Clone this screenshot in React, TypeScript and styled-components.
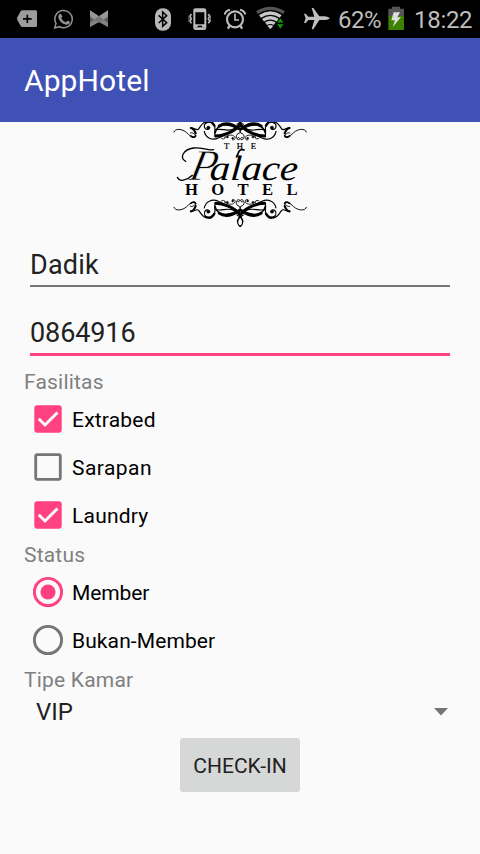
import React, { useState } from 'react';
import styled, { createGlobalStyle } from 'styled-components';

const GlobalStyle = createGlobalStyle`
  * { box-sizing: border-box; }
  body { margin: 0; background: #fafafa; font-family: Roboto, "Noto Sans", sans-serif; }
`;

const Screen = styled.div`
  width: 480px;
  height: 854px;
  display: flex;
  flex-direction: column;
  background: #fafafa;
  overflow: hidden;
`;

const StatusBar = styled.div`
  height: 38px;
  flex: none;
  display: flex;
  background: #000;
`;

const Glyph = styled.svg<{ $gap: number }>`
  flex: none;
  height: 38px;
  margin-left: ${(p) => p.$gap}px;
`;

const StatusText = styled.span<{ $gap: number; $width: number; $spacing: number }>`
  flex: none;
  width: ${(p) => p.$width}px;
  margin-left: ${(p) => p.$gap}px;
  letter-spacing: ${(p) => p.$spacing}px;
  font-size: 24px;
  line-height: 40px;
  white-space: nowrap;
  color: #bebebe;
`;

const AppBar = styled.header`
  height: 84px;
  flex: none;
  display: flex;
  align-items: center;
  padding: 1px 24px 0;
  background: #3f51b5;
`;

const Title = styled.h1`
  margin: 0;
  font-size: 30px;
  font-weight: 400;
  line-height: 36px;
  letter-spacing: 0.1px;
  color: #fff;
`;

const Form = styled.main`
  flex: 1;
  display: flex;
  flex-direction: column;
  padding: 0 24px;
`;

const Logo = styled.svg`
  width: 150px;
  height: 113px;
  flex: none;
  margin-left: 141px;
`;

const Field = styled.input<{ $focused?: boolean }>`
  height: ${(p) => (p.$focused ? 69 : 52)}px;
  flex: none;
  margin: 0 6px;
  padding: ${(p) => (p.$focused ? '25px 0 0' : '9px 0 0')};
  border: 0;
  border-bottom: ${(p) => (p.$focused ? '3px solid #ff4081' : '2px solid #757575')};
  outline: 0;
  background: transparent;
  font: 400 27px Roboto, "Noto Sans", sans-serif;
  letter-spacing: ${(p) => (p.$focused ? -0.1 : 0.2)}px;
  color: #212121;
`;

const Label = styled.div<{ $height: number; $top: number }>`
  height: ${(p) => p.$height}px;
  flex: none;
  padding-top: ${(p) => p.$top}px;
  font-size: 21px;
  line-height: 26px;
  letter-spacing: 0.2px;
  color: #808080;
`;

const OptionRow = styled.div`
  height: 48px;
  flex: none;
  display: flex;
  align-items: center;
  gap: 8px;
  padding-left: 8px;
  font-size: 21px;
  line-height: 26px;
  color: #000;
  cursor: pointer;
`;

const OptionMark = styled.svg`
  width: 32px;
  height: 32px;
  flex: none;
`;

const OptionText = styled.span<{ $spacing?: number }>`
  padding-top: 2px;
  letter-spacing: ${(p) => p.$spacing ?? 0}px;
`;

const Spinner = styled.div`
  height: 39px;
  flex: none;
  display: flex;
  align-items: center;
  justify-content: space-between;
  padding: 0 8px 0 12px;
  font-size: 24px;
  line-height: 28px;
  color: #212121;
`;

const Arrow = styled.svg`
  width: 14px;
  height: 8px;
`;

const CheckInButton = styled.button`
  width: 120px;
  height: 54px;
  flex: none;
  align-self: center;
  margin-top: 7px;
  padding: 2px 0 0;
  border: 0;
  border-radius: 3px;
  background: #d6d7d7;
  font: 400 21px Roboto, "Noto Sans", sans-serif;
  color: #212121;
`;

function StatusIcons() {
  return (
    <StatusBar>
      <Glyph $gap={16} width="22" viewBox="48 0 66 114">
        <path d="M68 31H107Q111 31 111 35V77Q111 81 107 81H68Q64 81 62 78L52 60Q50 56 52 52L62 34Q64 31 68 31Z" fill="#9c9c9c" />
        <path d="M82 44V69M69 56.500H95" stroke="#000" strokeWidth="5" />
      </Glyph>
      <Glyph $gap={15} width="21" viewBox="159 0 63 114">
        <path d="M164 84L168 70A26 26 0 1 1 178 80Z" fill="none" stroke="#929292" strokeWidth="4.500" />
        <path d="M180 43C183 41 185 43 188 50C188 53 185 54 185 56C188 62 192 66 198 68C200 67 202 63 204 63C208 64 211 66 211 68C210 74 204 75 200 75C187 73 176 60 176 51C176 47 178 44 180 43Z" fill="#929292" transform="translate(-1 -1)" />
      </Glyph>
      <Glyph $gap={15} width="20" viewBox="267 0 60 114">
        <path d="M270 31L297 49L324 31V81L297 65L270 81Z" fill="#6f6f6f" />
        <path d="M270 31L297 49L283 59L270 49ZM324 31L297 49L311 59L324 49Z" fill="#969696" />
        <path d="M297 49L311 59L297 68L283 59Z" fill="#777" />
        <path d="M270 51L283 59L270 68ZM324 51L311 59L324 68Z" fill="#5c5c5c" />
        <path d="M270 68L283 59L297 66L270 81ZM324 68L311 59L297 66L324 81Z" fill="#828282" />
      </Glyph>
      <Glyph $gap={46} width="16" viewBox="45 0 48 114">
        <rect x="45" y="25" width="48" height="67" rx="23" fill="#b8b8b8" />
        <path d="M56 46L80 68L68 79V36L80 47L56 69" fill="none" stroke="#000" strokeWidth="4.500" />
      </Glyph>
      <Glyph $gap={17} width="23" viewBox="144 0 69 114">
        <rect x="163" y="28" width="33" height="59" rx="4" fill="none" stroke="#bcbcbc" strokeWidth="6" />
        <path d="M161 32H198M161 78H198" stroke="#bcbcbc" strokeWidth="10" />
        <path d="M173 79H186" stroke="#000" strokeWidth="4" />
        <path d="M154 42L150 49L154 56L150 63L154 70M205 42L209 49L205 56L209 63L205 70" fill="none" stroke="#b4b4b4" strokeWidth="5" />
        <path d="M147 47V66M212 47V66" stroke="#888" strokeWidth="3" />
      </Glyph>
      <Glyph $gap={13} width="22" viewBox="252 0 66 114">
        <circle cx="285" cy="58" r="24" fill="none" stroke="#bcbcbc" strokeWidth="6.500" />
        <path d="M285 41V60H297" fill="none" stroke="#bcbcbc" strokeWidth="5" />
        <path d="M268 77L264 86M302 77L306 86" stroke="#bcbcbc" strokeWidth="7" />
        <path d="M254 44Q256 32 270 29M316 44Q314 32 300 29" fill="none" stroke="#bcbcbc" strokeWidth="6" />
      </Glyph>
      <Glyph $gap={10} width="30" viewBox="348 0 90 114">
        <path d="M351 38Q391 12 432 38" fill="none" stroke="#555" strokeWidth="10" />
        <g fill="none" stroke="#c8c8c8" strokeWidth="10">
          <path d="M360 49Q391 29 422 49" />
          <path d="M369 60.500Q391 46 413 60.500" />
          <path d="M378 71Q391 63 404 71" />
        </g>
        <path d="M382 77Q391 73 400 77L391 88Z" fill="#c8c8c8" />
        <path d="M411 68L421 54L431 68ZM411 72H431L421 87Z" fill="#0a9908" stroke="#000" strokeWidth="1" />
      </Glyph>
      <Glyph $gap={17} width="28" viewBox="39 0 84 114">
        <path d="M65 24L70 24L88 49H105Q115 50 120 55Q115 60 105 60H88L70 88H65L73 60H55L47 69H42L47 55L42 41H47L55 50H73Z" fill="#bfbfbf" />
      </Glyph>
      <StatusText $gap={7} $width={44} $spacing={-0.5}>62%</StatusText>
      <Glyph $gap={6} width="16" viewBox="294 0 48 114">
        <path d="M295 26H306V20H330V26H342V48H295Z" fill="#555" />
        <path d="M295 48H342V90H295Z" fill="#3d8100" />
        <path d="M311 37H330L322 52H333L308 81L315 61H304Z" fill="#ddd" />
      </Glyph>
      <StatusText $gap={10} $width={64} $spacing={-0.3}>18:22</StatusText>
    </StatusBar>
  );
}

function FlourishHalf() {
  return (
    <g fill="none" stroke="#000" strokeLinecap="round">
      <path d="M27 277C30 289 52 287 65 275C78 262 89 257 92 263C94 269 80 278 76 274" strokeWidth="2.800" />
      <path d="M76 289C86 292 94 279 101 286C107 294 112 307 126 309" strokeWidth="3.500" />
      <path d="M78 289Q87 287 92 273" strokeWidth="6.500" />
      <path d="M77 265Q88 258 92 266" strokeWidth="5" />
      <path d="M132 287C124 281 115 289 119 300C125 310 141 311 148 297C153 287 146 275 151 266" strokeWidth="3.500" />
      <circle cx="130" cy="290" r="5" fill="#000" />
      <path d="M123 306Q139 313 148 296" strokeWidth="7" />
      <path d="M118 279C121 260 141 250 160 259C184 271 203 274 225 299" strokeWidth="3.500" />
      <path d="M152 265C174 265 207 277 224 298" strokeWidth="9" />
      <path d="M150 274C158 303 185 305 224 285" strokeWidth="4.500" />
      <path d="M163 295C181 307 202 301 222 287" strokeWidth="9" />
      <path d="M152 284C171 289 187 277 206 286C219 291 225 299 231 312C235 322 233 331 224 334" strokeWidth="3.500" />
      <path d="M217 320C218 313 226 305 235 300" strokeWidth="3.500" />
      <path d="M223 274C208 270 214 254 221 254C229 255 220 264 218 260M225 276V284" strokeWidth="3" />
      <path d="M179 260C184 268 202 271 209 263C213 257 207 250 202 254M169 258C174 253 184 258 180 263" strokeWidth="2.500" />
      <circle cx="203" cy="258" r="3" fill="#000" />
      <circle cx="187" cy="262" r="3" fill="#000" />
    </g>
  );
}

function Flourish() {
  return (
    <g>
      <FlourishHalf />
      <g transform="translate(451 0) scale(-1 1)"><FlourishHalf /></g>
    </g>
  );
}

function PalaceLogo() {
  return (
    <Logo viewBox="0 21 450 339">
      <g transform="translate(0 328) scale(1 -1)"><Flourish /></g>
      <g fontFamily="Liberation Serif, serif" fill="#000">
        <text x="177" y="102" fontSize="26" stroke="#000" strokeWidth="0.700" textLength="96">THE</text>
        <text transform="translate(69 196) skewX(-12)" fontSize="132" fontStyle="italic" stroke="#fafafa" strokeWidth="2">P</text>
        <text transform="translate(133 196) skewX(-4)" fontSize="106" fontStyle="italic" textLength="264" lengthAdjust="spacingAndGlyphs">alace</text>
        <text x="60" y="241" fontSize="50" fontWeight="700" textLength="338">HOTEL</text>
      </g>
      <path d="M62 139C42 130 54 103 86 99C109 96 128 107 146 104M37 187C43 202 65 197 82 181" fill="none" stroke="#000" strokeWidth="4" strokeLinecap="round" />
      <path d="M214 128L222 109Q228 101 239 106" fill="none" stroke="#000" strokeWidth="5" />
      <Flourish />
    </Logo>
  );
}

interface OptionProps {
  text: string;
  on: boolean;
  spacing?: number;
  onToggle: () => void;
}

function CheckOption({ text, on, spacing, onToggle }: OptionProps) {
  return (
    <OptionRow role="checkbox" aria-checked={on} onClick={onToggle}>
      <OptionMark viewBox="0 0 32 32">
        {on ? (
          <>
            <rect x="2.300" y="2.300" width="27.400" height="27.400" rx="3" fill="#ff4081" />
            <path d="M6.700 15.700L13 22L25.500 9.500" fill="none" stroke="#fafafa" strokeWidth="3" />
          </>
        ) : (
          <rect x="3.700" y="3.700" width="24.600" height="24.600" rx="1.500" fill="none" stroke="#757575" strokeWidth="2.800" />
        )}
      </OptionMark>
      <OptionText $spacing={spacing}>{text}</OptionText>
    </OptionRow>
  );
}

function RadioOption({ text, on, spacing, onToggle }: OptionProps) {
  const color = on ? '#ff4081' : '#757575';
  return (
    <OptionRow role="radio" aria-checked={on} onClick={onToggle}>
      <OptionMark viewBox="0 0 32 32">
        <circle cx="16" cy="16" r="13.600" fill="none" stroke={color} strokeWidth="2.900" />
        {on && <circle cx="16" cy="16" r="7.600" fill={color} />}
      </OptionMark>
      <OptionText $spacing={spacing}>{text}</OptionText>
    </OptionRow>
  );
}

export default function App() {
  const [extras, setExtras] = useState({ Extrabed: true, Sarapan: false, Laundry: true });
  const [status, setStatus] = useState('Member');
  const toggle = (k: keyof typeof extras) => setExtras({ ...extras, [k]: !extras[k] });

  return (
    <Screen>
      <GlobalStyle />
      <StatusIcons />
      <AppBar>
        <Title>AppHotel</Title>
      </AppBar>
      <Form>
        <PalaceLogo />
        <Field defaultValue="Dadik" />
        <Field $focused defaultValue="0864916" />
        <Label $height={39} $top={13}>Fasilitas</Label>
        <CheckOption text="Extrabed" spacing={0.2} on={extras.Extrabed} onToggle={() => toggle('Extrabed')} />
        <CheckOption text="Sarapan" spacing={0.45} on={extras.Sarapan} onToggle={() => toggle('Sarapan')} />
        <CheckOption text="Laundry" spacing={0.2} on={extras.Laundry} onToggle={() => toggle('Laundry')} />
        <Label $height={29} $top={3}>Status</Label>
        <RadioOption text="Member" spacing={-0.1} on={status === 'Member'} onToggle={() => setStatus('Member')} />
        <RadioOption text="Bukan-Member" spacing={0.1} on={status === 'Bukan-Member'} onToggle={() => setStatus('Bukan-Member')} />
        <Label $height={28} $top={3}>Tipe Kamar</Label>
        <Spinner>
          VIP
          <Arrow viewBox="0 0 14 8"><path d="M0 0H14L7 7.500Z" fill="#757575" /></Arrow>
        </Spinner>
        <CheckInButton>CHECK-IN</CheckInButton>
      </Form>
    </Screen>
  );
}
